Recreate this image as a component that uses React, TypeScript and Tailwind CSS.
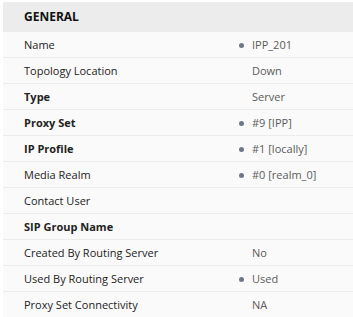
const rows: { label: string; value?: string; bold?: boolean; dot?: boolean }[] = [
  { label: "Name", value: "IPP_201", dot: true },
  { label: "Topology Location", value: "Down" },
  { label: "Type", value: "Server", bold: true },
  { label: "Proxy Set", value: "#9 [IPP]", bold: true, dot: true },
  { label: "IP Profile", value: "#1 [locally]", bold: true, dot: true },
  { label: "Media Realm", value: "#0 [realm_0]", dot: true },
  { label: "Contact User" },
  { label: "SIP Group Name", bold: true },
  { label: "Created By Routing Server", value: "No" },
  { label: "Used By Routing Server", value: "Used", dot: true },
  { label: "Proxy Set Connectivity", value: "NA" },
];

export default function App() {
  return (
    <div className="w-[353px] h-[317px] overflow-hidden bg-white pl-[3px] pt-[2px] font-['Open_Sans',sans-serif] text-[11px]">
      {/* Header */}
      <div className="h-[30px] bg-[#ececec] flex items-center pl-[21px] font-bold text-[#111] text-[12px]">
        GENERAL
      </div>

      {/* Rows */}
      {rows.map((r) => (
        <div
          key={r.label}
          className="h-[26px] pt-[1px] bg-[#fafafa] border-b border-[#ececec] flex items-center"
        >
          <div
            className={`w-[236px] pl-[21px] text-[#222] ${r.bold ? "font-bold" : ""}`}
          >
            {r.label}
          </div>
          <div className="w-[13px] flex items-center">
            {r.dot && <span className="w-[5px] h-[5px] rounded-full bg-[#6f7787]" />}
          </div>
          <div className="text-[#5a5a5a]">{r.value}</div>
        </div>
      ))}
    </div>
  );
}
